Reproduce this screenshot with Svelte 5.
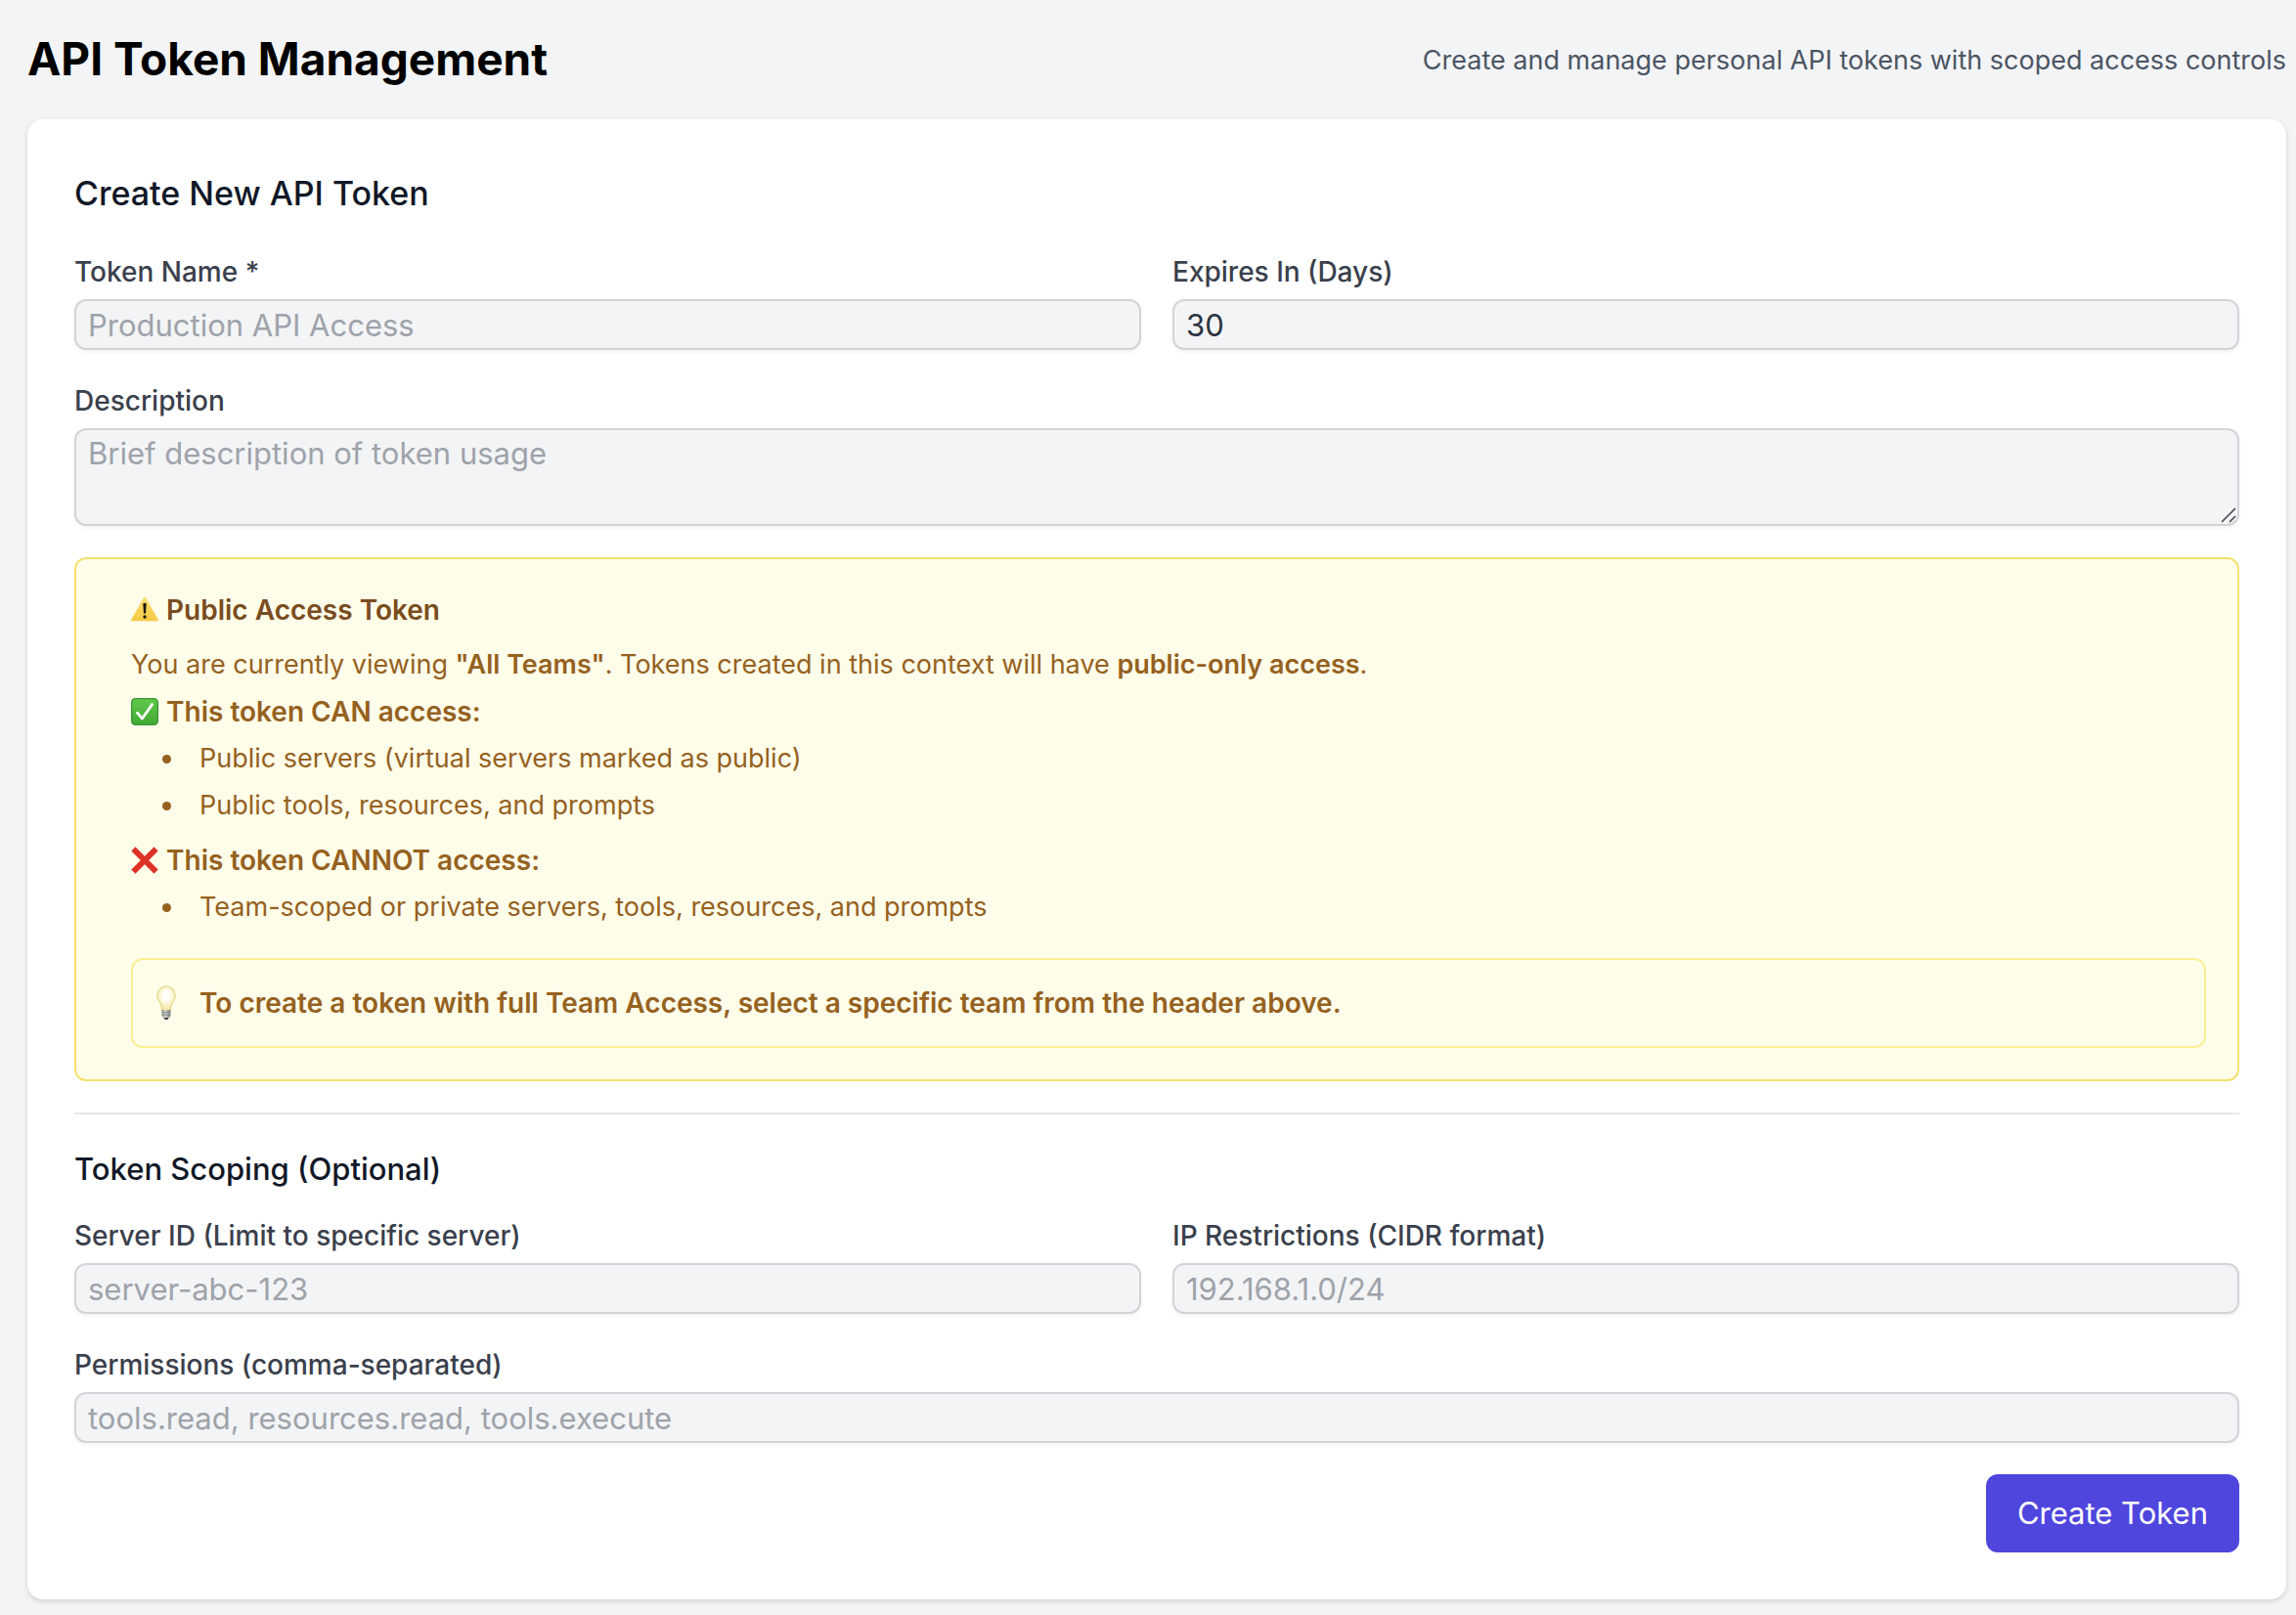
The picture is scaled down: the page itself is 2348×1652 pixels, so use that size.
<script>
  let name = $state('');
  let expires = $state(30);
  let description = $state('');
  let serverId = $state('');
  let ipRestrictions = $state('');
  let permissions = $state('');

  const canAccess = [
    'Public servers (virtual servers marked as public)',
    'Public tools, resources, and prompts',
  ];
  const cannotAccess = ['Team-scoped or private servers, tools, resources, and prompts'];
</script>

<main class="page">
  <header class="header">
    <h1>API Token Management</h1>
    <p class="subtitle">Create and manage personal API tokens with scoped access controls</p>
  </header>

  <section class="card">
    <h2>Create New API Token</h2>

    <form class="form" onsubmit={(e) => e.preventDefault()}>
      <div class="columns">
        <div class="field">
          <label for="token-name">Token Name *</label>
          <input id="token-name" type="text" placeholder="Production API Access" bind:value={name} />
        </div>
        <div class="field">
          <label for="token-expires">Expires In (Days)</label>
          <input id="token-expires" type="number" min="1" bind:value={expires} />
        </div>
      </div>

      <div class="field">
        <label for="token-description">Description</label>
        <div class="textarea-wrap">
          <textarea
            id="token-description"
            rows="2"
            placeholder="Brief description of token usage"
            bind:value={description}
          ></textarea>
          <svg class="grip" viewBox="0 0 16 16" aria-hidden="true">
            <path d="M1 15 15 1M9 15l6-6" fill="none" stroke="#fff" stroke-width="4" />
            <path d="M1 15 15 1M9 15l6-6" fill="none" stroke="#5f6165" stroke-width="1.8" />
          </svg>
        </div>
      </div>

      <div class="notice">
        <h3>
          <svg class="icon" viewBox="0 0 28 28" aria-hidden="true">
            <defs>
              <linearGradient id="warn" x1="0" y1="0" x2="0" y2="1">
                <stop offset="0" stop-color="#fbdf72" />
                <stop offset="1" stop-color="#f6c944" />
              </linearGradient>
            </defs>
            <path
              d="M13 1.2q1-1.6 2 0L27.6 23.4q.8 1.800-1 1.800H1.400q-1.800 0-1-1.800z"
              fill="url(#warn)"
            />
            <path d="M12.3 7.400q1.700-1.200 3.400 0L15 17.600h-2z" fill="#1c1a10" />
            <circle cx="14" cy="21" r="1.7" fill="#1c1a10" />
          </svg>
          Public Access Token
        </h3>

        <div class="notice-body">
          <p>
            You are currently viewing <strong>"All Teams"</strong>. Tokens created in this context
            will have <strong>public-only access</strong>.
          </p>

          <div class="access">
            <p class="access-title">
              <svg class="icon" viewBox="0 0 28 28" aria-hidden="true">
                <defs>
                  <linearGradient id="check" x1="0" y1="0" x2="0" y2="1">
                    <stop offset="0" stop-color="#5fc94a" />
                    <stop offset="1" stop-color="#43a834" />
                  </linearGradient>
                </defs>
                <rect
                  x="0.6"
                  y="0.6"
                  width="26.8"
                  height="26.8"
                  rx="4"
                  fill="url(#check)"
                  stroke="#3b9432"
                  stroke-width="1.2"
                />
                <path
                  d="M6.4 15.2 11.4 21 21.6 6.6"
                  fill="none"
                  stroke="#fff"
                  stroke-width="2.8"
                  stroke-linecap="round"
                  stroke-linejoin="round"
                />
              </svg>
              This token CAN access:
            </p>
            <ul>
              {#each canAccess as item}
                <li>{item}</li>
              {/each}
            </ul>
          </div>

          <div class="access">
            <p class="access-title">
              <svg class="icon" viewBox="0 0 28 28" aria-hidden="true">
                <path d="M2.4 2.4 25.6 25.6M25.6 2.4 2.4 25.6" stroke="#dd3226" stroke-width="5.8" />
              </svg>
              This token CANNOT access:
            </p>
            <ul>
              {#each cannotAccess as item}
                <li>{item}</li>
              {/each}
            </ul>
          </div>
        </div>

        <div class="tip">
          <svg class="bulb" viewBox="0 0 20 36" aria-hidden="true">
            <defs>
              <radialGradient id="glass" cx="0.5" cy="0.4" r="0.6">
                <stop offset="0.3" stop-color="#fffefa" />
                <stop offset="1" stop-color="#f3e49a" />
              </radialGradient>
              <linearGradient id="base" x1="0" y1="0" x2="1" y2="0">
                <stop offset="0" stop-color="#8b8b86" />
                <stop offset="0.4" stop-color="#d8d8d4" />
                <stop offset="1" stop-color="#7a7a76" />
              </linearGradient>
            </defs>
            <path
              d="M10 .8a9.3 9.3 0 0 1 9.3 9.4c0 4.6-3.2 6.8-4.1 10-.4 1.5-.7 3.8-.7 5.3h-9c0-1.5-.3-3.8-.7-5.3C3.9 17 .7 14.8.7 10.2A9.3 9.3 0 0 1 10 .8z"
              fill="url(#glass)"
              stroke="#e6d68c"
              stroke-width="1.2"
            />
            <path d="M5.6 25h8.8v5.5q0 2-2 2.500h-4.800q-2-.5-2-2.500z" fill="url(#base)" />
            <path d="M5.8 27.7h8.4M5.8 30.2h8.4" stroke="#777" stroke-width=".7" />
            <path d="M7.3 33h5.4l-1.500 2H8.8z" fill="#3a3a38" />
          </svg>
          <strong>To create a token with full Team Access, select a specific team from the header above.</strong>
        </div>
      </div>

      <div class="scoping">
        <h3>Token Scoping (Optional)</h3>
        <div class="form">
          <div class="columns">
            <div class="field">
              <label for="server-id">Server ID (Limit to specific server)</label>
              <input id="server-id" type="text" placeholder="server-abc-123" bind:value={serverId} />
            </div>
            <div class="field">
              <label for="ip-restrictions">IP Restrictions (CIDR format)</label>
              <input
                id="ip-restrictions"
                type="text"
                placeholder="192.168.1.0/24"
                bind:value={ipRestrictions}
              />
            </div>
          </div>
          <div class="field">
            <label for="permissions">Permissions (comma-separated)</label>
            <input
              id="permissions"
              type="text"
              placeholder="tools.read, resources.read, tools.execute"
              bind:value={permissions}
            />
          </div>
        </div>
      </div>

      <div class="actions">
        <button type="submit">Create Token</button>
      </div>
    </form>
  </section>
</main>

<style>
  :global(body) {
    background: #f3f4f6;
  }

  .page,
  .page * {
    box-sizing: border-box;
  }

  .page {
    padding: 28px 10px 16px 28px;
    font-family: Inter, 'Liberation Sans', sans-serif;
    font-size: 27px;
    line-height: 40px;
    color: #111827;
  }

  h1,
  h2,
  h3,
  p,
  ul {
    margin: 0;
  }

  .header {
    display: flex;
    align-items: center;
    justify-content: space-between;
    margin-bottom: 30px;
  }

  h1 {
    font-size: 46px;
    line-height: 64px;
    font-weight: 700;
    color: #000;
  }

  .subtitle {
    margin-top: 4px;
    color: #4b5563;
  }

  .card {
    padding: 48px;
    border-radius: 16px;
    background: #fff;
    box-shadow:
      0 2px 6px rgba(0, 0, 0, 0.1),
      0 2px 4px rgba(0, 0, 0, 0.06);
  }

  h2 {
    margin-bottom: 32px;
    font-size: 34px;
    line-height: 56px;
    font-weight: 500;
  }

  .form {
    display: flex;
    flex-direction: column;
    gap: 32px;
  }

  .columns {
    display: grid;
    grid-template-columns: 1fr 1fr;
    gap: 32px;
  }

  .field {
    display: flex;
    flex-direction: column;
    gap: 8px;
  }

  label {
    font-size: 28px;
    font-weight: 500;
    color: #3a404c;
  }

  input,
  textarea {
    display: block;
    width: 100%;
    margin: 0;
    padding: 0 12px;
    border: 2px solid #d2d4d8;
    border-radius: 12px;
    background: #f3f4f6;
    box-shadow: 0 2px 4px rgba(0, 0, 0, 0.05);
    font-family: inherit;
    font-size: 31px;
    line-height: 48px;
    color: #2b3340;
    outline: none;
  }

  input {
    height: 52px;
  }

  input[type='number'] {
    appearance: textfield;
  }

  input::placeholder,
  textarea::placeholder {
    color: #9ea3aa;
    opacity: 1;
  }

  input:focus,
  textarea:focus {
    border-color: #6366f1;
  }

  .textarea-wrap {
    position: relative;
  }

  textarea {
    resize: none;
  }

  .grip {
    position: absolute;
    right: 3px;
    bottom: 3px;
    width: 16px;
    height: 16px;
    pointer-events: none;
  }

  .notice {
    padding: 32px 32px 32px 56px;
    border: 2px solid #f5e06e;
    border-radius: 12px;
    background: #fefde9;
    color: #95611f;
  }

  .notice h3 {
    margin-bottom: 16px;
    font-size: 28px;
    font-weight: 600;
    color: #7a4c1e;
  }

  .notice-body {
    display: flex;
    flex-direction: column;
    gap: 8px;
  }

  strong,
  .access-title {
    font-weight: 600;
  }

  .notice h3,
  .access-title {
    display: flex;
    align-items: center;
    gap: 8px;
  }

  .access-title,
  .tip {
    font-size: 28px;
  }

  .icon {
    flex: none;
    width: 28px;
    height: 28px;
  }

  ul {
    display: flex;
    flex-direction: column;
    gap: 8px;
    margin-top: 8px;
    padding: 0 0 0 32px;
    list-style: none;
  }

  li {
    display: flex;
    align-items: center;
    gap: 29px;
  }

  li::before {
    content: '';
    width: 9px;
    height: 9px;
    border-radius: 50%;
    background: currentColor;
  }

  .access + .access {
    margin-top: 8px;
  }

  .tip {
    display: flex;
    align-items: center;
    gap: 24px;
    margin-top: 32px;
    padding: 24px;
    border: 2px solid #fbef94;
    border-radius: 12px;
  }

  .bulb {
    flex: none;
    width: 20px;
    height: 36px;
  }

  .scoping {
    padding-top: 32px;
    border-top: 2px solid #e7e8ea;
  }

  .scoping h3 {
    margin-bottom: 24px;
    font-size: 31px;
    line-height: 48px;
    font-weight: 500;
  }

  .actions {
    display: flex;
    justify-content: flex-end;
  }

  button {
    padding: 16px 32px;
    border: none;
    border-radius: 12px;
    background: #4f46de;
    font-family: inherit;
    font-size: 31px;
    line-height: 48px;
    color: #fff;
    cursor: pointer;
  }

  button:hover {
    background: #4338ca;
  }

  @media (max-width: 900px) {
    .header {
      flex-direction: column;
      align-items: flex-start;
    }

    .columns {
      grid-template-columns: 1fr;
    }
  }
</style>
